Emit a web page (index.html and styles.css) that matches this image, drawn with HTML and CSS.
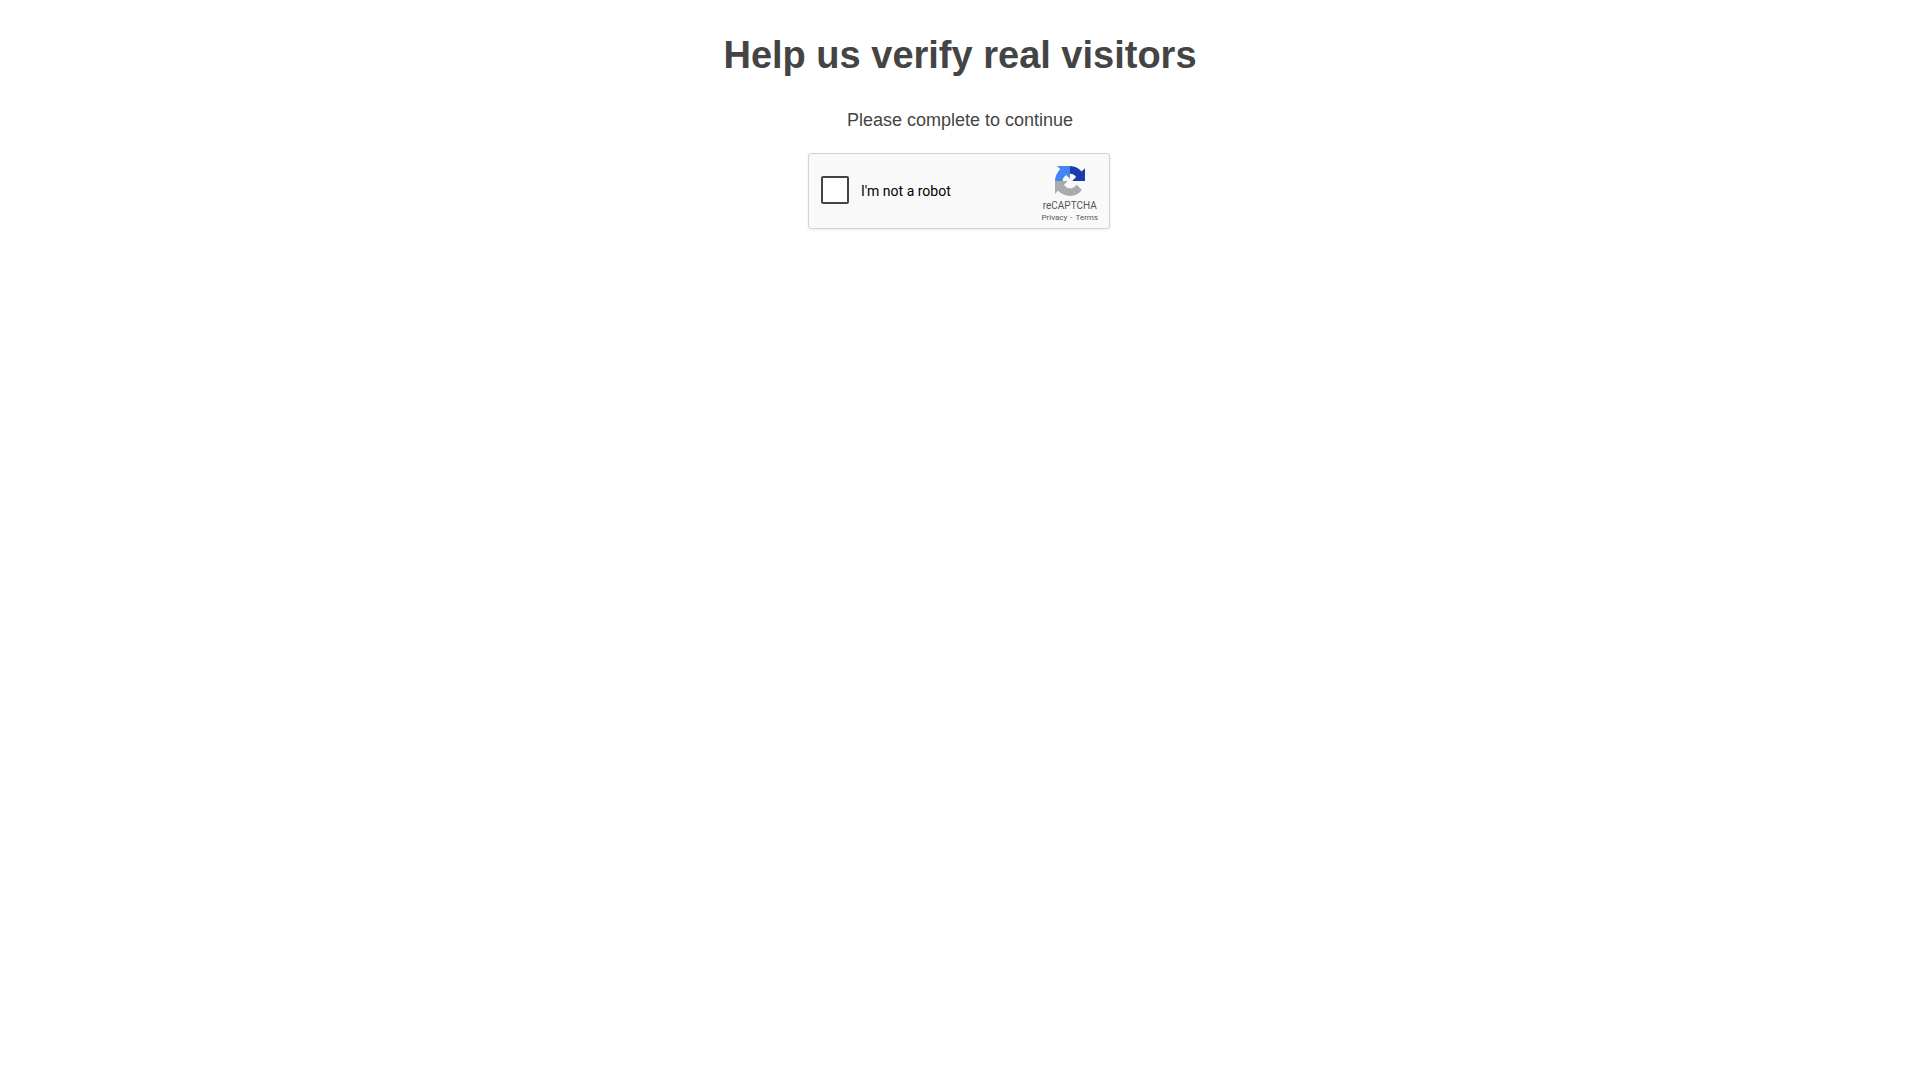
FILE: index.html
```html
<!DOCTYPE html>
<html lang="en">
<head>
<meta charset="utf-8">
<title>Help us verify real visitors</title>
<link rel="stylesheet" href="styles.css">
</head>
<body>
<main class="page">
  <h1 class="title">Help us verify real visitors</h1>
  <p class="intro">Please complete to continue</p>
  <form class="captcha">
    <input class="captcha-box" type="checkbox" id="robot">
    <label class="captcha-label" for="robot">I'm not a robot</label>
    <div class="brand">
      <svg class="brand-logo" viewBox="0 0 64 64" aria-hidden="true">
        <path fill="#1c3aa9" d="M64 31.955l-.033-1.37V4.687l-7.16 7.16C50.948 4.674 42.033.093 32.05.093c-10.4 0-19.622 4.96-25.458 12.64l11.736 11.86a15.55 15.55 0 0 1 4.754-5.334c2.05-1.6 4.952-2.906 8.968-2.906.485 0 .86.057 1.135.163 4.976.393 9.288 3.14 11.828 7.124l-8.307 8.307L64 31.953"/>
        <path fill="#4285f4" d="M31.862.094l-1.37.033H4.594l7.16 7.16C4.58 13.147 0 22.06 0 32.046c0 10.4 4.96 19.622 12.64 25.458L24.5 45.768a15.55 15.55 0 0 1-5.334-4.754c-1.6-2.05-2.906-4.952-2.906-8.968 0-.485.057-.86.163-1.135.393-4.976 3.14-9.288 7.124-11.828l8.307 8.307L31.86.095"/>
        <path fill="#ababab" d="M.001 32.045l.033 1.37v25.898l7.16-7.16c5.86 7.173 14.774 11.754 24.76 11.754 10.4 0 19.622-4.96 25.458-12.64l-11.736-11.86a15.55 15.55 0 0 1-4.754 5.334c-2.05 1.6-4.952 2.906-8.968 2.906-.485 0-.86-.057-1.135-.163-4.976-.393-9.288-3.14-11.828-7.124l8.307-8.307c-10.522.04-22.4.066-27.295-.005"/>
      </svg>
      <span class="brand-name">reCAPTCHA</span>
      <span class="brand-links"><a href="#privacy">Privacy</a><span>-</span><a href="#terms">Terms</a></span>
    </div>
  </form>
</main>
</body>
</html>
```
FILE: styles.css
```css
body {
  margin: 0;
  background: #fff;
  color: #444;
  font-family: "Liberation Sans", Arial, sans-serif;
}

.page {
  display: flex;
  flex-direction: column;
  align-items: center;
  padding: 32px 16px;
}

.title {
  margin: 0 0 30px;
  font-size: 38px;
  line-height: 46px;
  text-align: center;
}

.intro {
  margin: 0 0 21px;
  font-size: 18px;
  line-height: 24px;
}

.captcha {
  display: flex;
  align-items: center;
  box-sizing: border-box;
  width: 302px;
  min-height: 76px;
  margin-right: 2px;
  padding: 0 11px 0 12px;
  border: 1px solid #d3d3d3;
  border-radius: 3px;
  background: #f9f9f9;
  box-shadow: 0 1px 3px rgba(0, 0, 0, 0.08);
  font-family: Roboto, sans-serif;
}

.captcha-box {
  appearance: none;
  width: 28px;
  height: 28px;
  margin: 0 12px 2px 0;
  border: 2px solid #444;
  border-radius: 2px;
  background: #fff;
}

.captcha-label {
  flex: 1;
  color: #000;
  font-size: 14px;
  line-height: 17px;
}

.brand {
  display: flex;
  flex-direction: column;
  align-items: center;
  padding-top: 8px;
  color: #555;
}

.brand-logo {
  width: 30px;
  height: 30px;
  margin-bottom: 4px;
}

.brand-name {
  font-size: 10px;
  line-height: 12px;
}

.brand-links {
  display: flex;
  gap: 3px;
  font-size: 8px;
  line-height: 12px;
}

.brand-links a {
  color: inherit;
  text-decoration: none;
}
```
